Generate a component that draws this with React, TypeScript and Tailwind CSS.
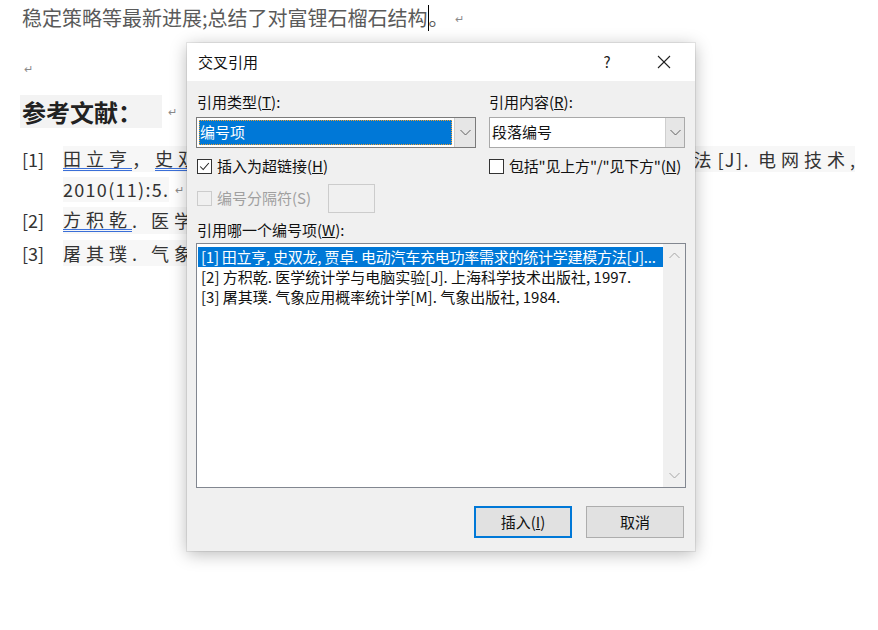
import React from "react";

const Chevron = ({ up = false, color = "#606060" }: { up?: boolean; color?: string }) => (
  <svg width="11" height="7" viewBox="0 0 11 7">
    <polyline
      points={up ? "0.5,6 5.5,1 10.5,6" : "0.5,1 5.5,6 10.5,1"}
      fill="none"
      stroke={color}
      strokeWidth="1"
    />
  </svg>
);

const Check = () => (
  <svg width="15" height="15" viewBox="0 0 15 15">
    <polyline points="2.5,7.5 6,11 12.5,3.5" fill="none" stroke="#222" strokeWidth="1.2" />
  </svg>
);

const Para = () => <span className="text-[11px] text-[#8a8a8a] ml-[6px] leading-none">↵</span>;

const Ul = ({ children }: { children: React.ReactNode }) => (
  <span className="border-b-[3px] border-double border-[#3a6fd8] leading-[20px]">{children}</span>
);

export default function App() {
  return (
    <div className="relative w-[878px] h-[630px] bg-white overflow-hidden font-['Noto_Sans_CJK_SC','Noto_Sans',sans-serif]">
      {/* Document */}
      <div className="pl-[22px]">
        <div className="h-[36px] flex items-center text-[20px] text-[#5a5a5a] whitespace-nowrap">
          <span>稳定策略等最新进展;总结了对富锂石榴石结构</span>
          <span className="w-[1px] h-[26px] bg-black" />
          <span>。</span>
          <Para />
        </div>
        <div className="h-[16px]" />
        <div className="h-[32px] flex items-center">
          <span className="text-[11px] text-[#8a8a8a] ml-[2px]">↵</span>
        </div>
        <div className="mt-[11px] h-[33px] flex items-center">
          <span className="h-[33px] flex items-center bg-[#f3f3f3] -ml-[2px] pl-[2px] pr-[20px] text-[24px] font-semibold text-[#222]">
            参考文献：
          </span>
          <Para />
        </div>
        <div className="mt-[18px] text-[18px] text-[#333] whitespace-nowrap">
          <div className="h-[26px] flex items-center">
            <span className="w-[41px]">[1]</span>
            <span className="w-[124px] overflow-hidden bg-[#f7f7f7] h-[26px] flex items-center tracking-[5px]">
              <Ul>田立亨</Ul>，<Ul>史双龙</Ul>
            </span>
            <span className="ml-auto mr-[23px] bg-[#f7f7f7] h-[26px] flex items-center">
              <span className="tracking-[6px]">法</span>
              <span className="tracking-[1.5px]">[J].</span>
              <span className="ml-[8px] tracking-[5px]">电网技术</span>
              <span>,</span>
            </span>
          </div>
          <div className="mt-[5px] h-[25px] flex items-center">
            <span className="ml-[41px] bg-[#f7f7f7] h-[25px] flex items-center tracking-[1.3px]">2010(11):5.</span>
            <Para />
          </div>
          <div className="mt-[5px] h-[27px] flex items-center">
            <span className="w-[41px]">[2]</span>
            <span className="w-[124px] overflow-hidden bg-[#f7f7f7] h-[27px] flex items-center tracking-[5px]">
              <Ul>方积乾</Ul>. 医学统计
            </span>
          </div>
          <div className="mt-[6px] h-[26px] flex items-center">
            <span className="w-[41px]">[3]</span>
            <span className="w-[124px] overflow-hidden bg-[#f7f7f7] h-[26px] flex items-center tracking-[5px]">屠其璞. 气象应用</span>
          </div>
        </div>
      </div>

      {/* Dialog */}
      <div className="absolute left-[187px] top-[43px] w-[508px] h-[508px] bg-[#f0f0f0] text-[15px] text-[#111] shadow-[0_0_0_1px_rgba(0,0,0,0.07),0_3px_16px_rgba(0,0,0,0.28)] flex flex-col">
        <div className="h-[38px] bg-white flex items-center pl-[11px] pr-[8px]">
          <span>交叉引用</span>
          <div className="ml-auto flex items-center gap-[11px]">
            <div className="w-[46px] flex justify-center text-[15px] text-[#222]">?</div>
            <div className="w-[46px] flex justify-center">
              <svg width="14" height="14" viewBox="0 0 14 14">
                <line x1="1" y1="1" x2="13" y2="13" stroke="#222" strokeWidth="1.1" />
                <line x1="13" y1="1" x2="1" y2="13" stroke="#222" strokeWidth="1.1" />
              </svg>
            </div>
          </div>
        </div>

        <div className="px-[9px] flex flex-col">
          <div className="mt-[11px] grid grid-cols-[280px_196px] gap-x-[13px]">
            <div className="pl-[1px] h-[20px] leading-[20px]">
              引用类型(<span className="underline">T</span>):
            </div>
            <div className="h-[20px] leading-[20px]">
              引用内容(<span className="underline">R</span>):
            </div>

            <div className="mt-[5px] h-[31px] border border-[#7a7a7a] bg-white flex">
              <div className="flex-1 p-[2px]">
                <div className="h-full bg-[#0078d7] text-white flex items-center pl-[1px] outline outline-1 outline-dotted outline-[#f0a030] -outline-offset-1">
                  编号项
                </div>
              </div>
              <div className="w-[21px] bg-[#e6e6e6] border-l border-[#cfcfcf] flex items-center justify-center">
                <Chevron />
              </div>
            </div>
            <div className="mt-[5px] h-[31px] border border-[#a9a9a9] bg-white flex">
              <div className="flex-1 flex items-center pl-[2px]">段落编号</div>
              <div className="w-[19px] bg-[#e6e6e6] border-l border-[#cfcfcf] flex items-center justify-center">
                <Chevron />
              </div>
            </div>

            <div className="mt-[8px] h-[20px] flex items-center">
              <div className="ml-[1px] w-[15px] h-[15px] border border-[#333] bg-white flex items-center justify-center">
                <Check />
              </div>
              <span className="ml-[5px]">
                插入为超链接(<span className="underline">H</span>)
              </span>
            </div>
            <div className="mt-[8px] h-[20px] flex items-center">
              <div className="w-[15px] h-[15px] border border-[#333] bg-white" />
              <span className="ml-[5px] tracking-[-0.2px]">
                包括"见上方"/"见下方"(<span className="underline">N</span>)
              </span>
            </div>
          </div>

          <div className="mt-[8px] h-[29px] flex items-center">
            <div className="w-[132px] flex items-center">
              <div className="ml-[1px] w-[15px] h-[15px] border border-[#cccccc] bg-[#f0f0f0]" />
              <span className="ml-[5px] text-[#a0a0a0]">编号分隔符(S)</span>
            </div>
            <div className="w-[47px] h-[29px] border border-[#cccccc] bg-[#f0f0f0]" />
          </div>

          <div className="mt-[7px] pl-[1px] h-[20px] leading-[20px]">
            引用哪一个编号项(<span className="underline">W</span>):
          </div>

          <div className="mt-[3px] w-[490px] h-[245px] border border-[#828790] bg-white flex">
            <div className="w-[466px] pt-[3px] pl-[1px] flex flex-col whitespace-nowrap">
              <div className="h-[20px] bg-[#0078d7] text-white flex items-center pl-[3px] tracking-[-0.25px]">
                [1] 田立亨, 史双龙, 贾卓. 电动汽车充电功率需求的统计学建模方法[J]...
              </div>
              <div className="h-[20px] flex items-center pl-[3px]">
                [2] 方积乾. 医学统计学与电脑实验[J]. 上海科学技术出版社, 1997.
              </div>
              <div className="h-[20px] flex items-center pl-[3px]">
                [3] 屠其璞. 气象应用概率统计学[M]. 气象出版社, 1984.
              </div>
            </div>
            <div className="w-[22px] bg-[#f0f0f0] flex flex-col items-center justify-between py-[8px]">
              <Chevron up color="#a6a6a6" />
              <Chevron color="#a6a6a6" />
            </div>
          </div>

          <div className="mt-[18px] pr-[2px] flex justify-end gap-[14px]">
            <button className="w-[98px] h-[32px] border-2 border-[#0078d7] bg-[#e1e1e1] flex items-center justify-center text-[15px] text-[#111]">
              插入(<span className="underline">I</span>)
            </button>
            <button className="w-[98px] h-[32px] border border-[#adadad] bg-[#e1e1e1] flex items-center justify-center text-[15px] text-[#111]">
              取消
            </button>
          </div>
        </div>
      </div>
    </div>
  );
}
